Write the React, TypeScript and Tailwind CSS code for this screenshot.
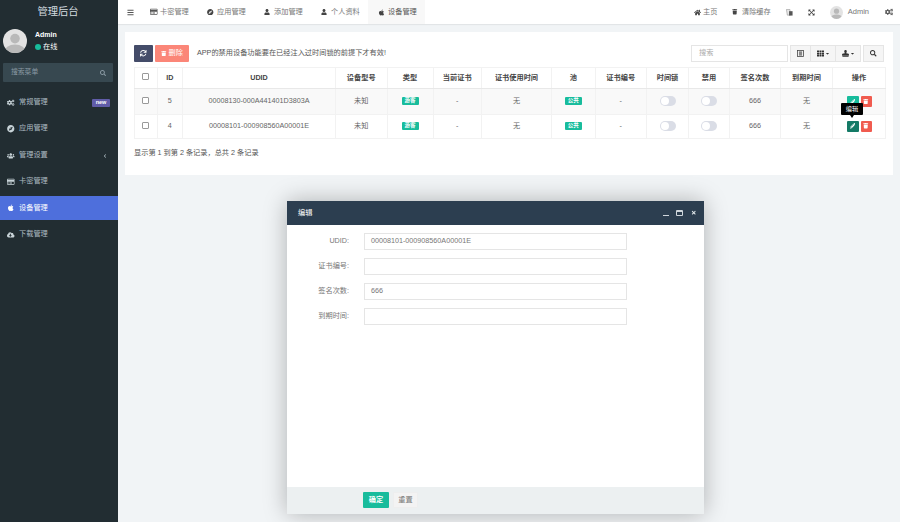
import React from "react";
import {
  FaSync, FaTrash, FaApple, FaRegCreditCard, FaUser, FaHome, FaCogs, FaExpandArrowsAlt,
  FaCompass, FaUsers, FaCloudDownloadAlt, FaTh, FaStamp, FaSearch,
  FaPencilAlt, FaBars, FaChevronLeft, FaCaretDown, FaTimes,
} from "react-icons/fa";

const font = { fontFamily: '"Liberation Sans", "Noto Sans CJK SC", sans-serif' };

function Avatar({ className, id }: { className: string; id: string }) {
  return (
    <svg viewBox="0 0 40 40" className={className}>
      <clipPath id={id}><circle cx="20" cy="20" r="20" /></clipPath>
      <g clipPath={`url(#${id})`}>
        <rect width="40" height="40" fill="#e3e3e3" />
        <circle cx="20" cy="16" r="8" fill="#b9b9b9" />
        <ellipse cx="20" cy="38" rx="18" ry="12" fill="#b9b9b9" />
      </g>
    </svg>
  );
}

function LangIcon() {
  return (
    <svg viewBox="0 0 8 8" className="w-[7px] h-[7px] ml-[15px]">
      <path d="M0.5 0.5H4.5L5 7H1.5Z" fill="#e8e8e8" stroke="#888" strokeWidth="0.6" />
      <path d="M3.5 2.5H7.5V7.5H3.5Z" fill="#555" />
    </svg>
  );
}

function ToggleColsIcon() {
  return (
    <svg viewBox="0 0 8 8" className="w-[7px] h-[7px]">
      <rect x="0.5" y="0.5" width="7" height="7" fill="none" stroke="#444" strokeWidth="0.9" />
      <rect x="2.2" y="1.5" width="3.6" height="5" fill="#888" />
    </svg>
  );
}

const menu = [
  { icon: <FaCogs />, label: "常规管理", badge: true },
  { icon: <FaCompass />, label: "应用管理" },
  { icon: <FaUsers />, label: "管理设置", arrow: true },
  { icon: <FaRegCreditCard />, label: "卡密管理" },
  { icon: <FaApple />, label: "设备管理", active: true },
  { icon: <FaCloudDownloadAlt />, label: "下载管理" },
];

const tabs = [
  { icon: <FaRegCreditCard className="text-[7.5px] text-[#555]" />, label: "卡密管理" },
  { icon: <FaCompass className="text-[6.5px]" />, label: "应用管理" },
  { icon: <FaUser className="text-[6px]" />, label: "添加管理" },
  { icon: <FaUser className="text-[6px]" />, label: "个人资料" },
  { icon: <FaApple className="text-[7px]" />, label: "设备管理", active: true },
];

const columns = [
  { t: "", w: "w-[22.5px]" },
  { t: "ID", w: "w-[25.5px]" },
  { t: "UDID", w: "w-[153px]" },
  { t: "设备型号", w: "w-[51.5px]" },
  { t: "类型", w: "w-[46px]" },
  { t: "当前证书", w: "w-[48.5px]" },
  { t: "证书使用时间", w: "w-[70px]" },
  { t: "池", w: "w-[43.5px]" },
  { t: "证书编号", w: "w-[51.5px]" },
  { t: "时间锁", w: "w-[42px]" },
  { t: "禁用", w: "w-[41px]" },
  { t: "签名次数", w: "w-[51px]" },
  { t: "到期时间", w: "w-[52px]" },
  { t: "操作", w: "w-[53px]" },
];

const rows = [
  { id: "5", udid: "00008130-000A441401D3803A", first: true },
  { id: "4", udid: "00008101-000908560A00001E", first: false },
];

function Toggle() {
  return (
    <span className="inline-block w-[16px] h-[10px] rounded-full bg-[#dadde6] align-middle relative">
      <span className="absolute left-[1px] top-[1px] w-[8px] h-[8px] rounded-full bg-white" />
    </span>
  );
}

function Badge({ children }: { children: React.ReactNode }) {
  return (
    <span className="inline-flex items-center justify-center w-[17px] h-[8px] rounded-[1px] bg-[#18bc9c] text-white text-[5.5px] font-bold leading-none align-middle">
      {children}
    </span>
  );
}

export default function App() {
  return (
    <div style={font} className="relative flex w-[900px] h-[522px] overflow-hidden bg-[#f1f4f6] text-[7.2px] text-[#666]">
      <aside className="w-[118px] shrink-0 bg-[#222d32] text-[#aebcc3] flex flex-col">
        <div className="h-[23px] flex items-center justify-center pr-[2px] text-[10.3px] text-[#d5dde0]">管理后台</div>
        <div className="h-[36px] flex items-center pl-[3px] gap-[8px]">
          <Avatar id="av1" className="w-[24px] h-[24px]" />
          <div className="flex flex-col gap-[3.5px]">
            <span className="font-bold text-white leading-[8px] text-[7px]">Admin</span>
            <span className="flex items-center gap-[2px] text-white leading-[8px]">
              <span className="w-[6px] h-[6px] rounded-full bg-[#18bc9c]" />在线
            </span>
          </div>
        </div>
        <div className="mt-[4px] ml-[3px] mr-[5px] h-[19px] bg-[#374850] rounded-[1px] flex items-center justify-between pl-[8px] pr-[7px] text-[#8a9aa3] text-[6.8px]">
          <span>搜索菜单</span>
          <FaSearch className="text-[6px]" />
        </div>
        <nav className="mt-[8.5px] flex flex-col gap-[2.4px]">
          {menu.map((m) => (
            <div
              key={m.label}
              className={`h-[24px] flex items-center pl-[7px] pr-[8px] ${m.active ? "bg-[#4e6fdc] text-white" : ""}`}
            >
              <span className={`w-[12px] text-[7.5px] ${m.active ? "text-white" : "text-[#c8d3d8]"}`}>{m.icon}</span>
              <span className="flex-1">{m.label}</span>
              {m.badge && (
                <span className="w-[18px] h-[8px] rounded-[1px] bg-[#605ca8] text-white text-[5.5px] font-bold flex items-center justify-center leading-none">new</span>
              )}
              {m.arrow && <FaChevronLeft className="text-[4px] mr-[3px] mt-[2px]" />}
            </div>
          ))}
        </nav>
      </aside>

      <main className="flex-1 min-w-0 flex flex-col">
        <header className="h-[24px] bg-white shadow-[0_1px_1px_rgba(0,0,0,0.06)] flex items-center text-[#777]">
          <FaBars className="ml-[9px] text-[7px] text-[#555]" />
          <div className="ml-[6px] flex h-full">
            {tabs.map((t, i) => (
              <div key={i} className={`w-[57px] h-full flex items-center pl-[10px] ${t.active ? "bg-[#f8f8f8] text-[#555]" : ""}`}>
                <span className="w-[10px] flex justify-start text-[#444]">{t.icon}</span>
                <span>{t.label}</span>
              </div>
            ))}
          </div>
          <div className="ml-auto flex items-center">
            <FaHome className="text-[7px] text-[#444] mr-[2px]" /><span>主页</span>
            <FaTrash className="text-[5.5px] text-[#444] ml-[15px] mr-[4px]" /><span>清除缓存</span>
            <LangIcon />
            <FaExpandArrowsAlt className="text-[7px] text-[#444] ml-[15px]" />
            <Avatar id="av2" className="w-[13px] h-[13px] ml-[15px]" />
            <span className="ml-[5px] text-[7.5px]">Admin</span>
            <FaCogs className="text-[8px] text-[#555] ml-[15.5px] mr-[7.5px]" />
          </div>
        </header>

        <section className="mt-[8px] mx-[7px] h-[143px] bg-white px-[9px] pt-[13px]">
          <div className="h-[17px] flex items-center">
            <button className="w-[19px] h-[17px] rounded-[1px] bg-[#444c69] text-white flex items-center justify-center text-[6.5px]"><FaSync /></button>
            <button className="ml-[2px] w-[34px] h-[17px] rounded-[1px] bg-[#fb8678] text-white flex items-center justify-center gap-[2px] text-[7.2px]"><FaTrash className="text-[5.5px]" />删除</button>
            <span className="ml-[8px] text-[#555]">APP的禁用设备功能要在已经注入过时间锁的前提下才有效!</span>
            <div className="ml-auto w-[97px] h-[17px] border border-[#e5e5e5] flex items-center pl-[7px] text-[#aaa]">搜索</div>
            <div className="ml-[2px] mr-[2px] h-[17px] flex border border-[#e5e5e5] bg-[#f5f5f5] text-[#333]">
              <span className="w-[20px] flex items-center justify-center border-r border-[#e5e5e5]"><ToggleColsIcon /></span>
              <span className="w-[25px] flex items-center justify-center gap-[1px] border-r border-[#e5e5e5] text-[7px]"><FaTh /><FaCaretDown className="text-[5px]" /></span>
              <span className="w-[24px] flex items-center justify-center gap-[1px] text-[7px]"><FaStamp /><FaCaretDown className="text-[5px]" /></span>
            </div>
            <div className="w-[21px] h-[17px] border border-[#e5e5e5] bg-[#f5f5f5] flex items-center justify-center text-[6.5px] text-[#333]"><FaSearch /></div>
          </div>

          <table className="mt-[5px] w-[751px] table-fixed border-collapse">
            <colgroup>{columns.map((c, i) => <col key={i} className={c.w} />)}</colgroup>
            <thead>
              <tr className="h-[21px]">
                {columns.map((c, i) => (
                  <th key={i} className={`border border-[#f2f2f2] border-b-[#e8e8e8] font-bold text-[#444] text-center p-0 ${i === 0 ? "pb-[2px]" : ""}`}>
                    {i === 0 ? <span className="inline-block w-[7px] h-[7px] border border-[#999] rounded-[1px] align-middle" /> : c.t}
                  </th>
                ))}
              </tr>
            </thead>
            <tbody>
              {rows.map((r) => {
                const td = `border border-[#f2f2f2] text-center p-0 ${r.first ? "" : "pb-[1px]"}`;
                return (
                  <tr key={r.id} className={r.first ? "h-[26px] bg-[#f9f9f9]" : "h-[24px]"}>
                    <td className={`border border-[#f2f2f2] text-center px-0 pb-0 align-top leading-none ${r.first ? "pt-[8px]" : "pt-[6.5px]"}`}>
                      <span className="inline-block w-[7px] h-[7px] border border-[#999] rounded-[1px] bg-white" />
                    </td>
                    <td className={td}>{r.id}</td>
                    <td className={td}>{r.udid}</td>
                    <td className={td}>未知</td>
                    <td className={td}><Badge>游客</Badge></td>
                    <td className={td}>-</td>
                    <td className={td}>无</td>
                    <td className={td}><Badge>公共</Badge></td>
                    <td className={td}>-</td>
                    <td className={td}><Toggle /></td>
                    <td className={td}><Toggle /></td>
                    <td className={td}>666</td>
                    <td className={td}>无</td>
                    <td className={td}>
                      <div className="flex justify-center gap-[2px]">
                        <span className={`w-[12px] h-[11px] rounded-[1px] flex items-center justify-center text-white text-[5.5px] ${r.first ? "bg-[#18bc9c]" : "bg-[#147a66]"}`}><FaPencilAlt /></span>
                        <span className="w-[11px] h-[11px] rounded-[1px] bg-[#f05b4f] flex items-center justify-center text-white text-[5.5px]"><FaTrash /></span>
                      </div>
                    </td>
                  </tr>
                );
              })}
            </tbody>
          </table>
          <p className="mt-[9px] text-[#555]">显示第 1 到第 2 条记录，总共 2 条记录</p>
        </section>
      </main>

      {/* tooltip over the edit button */}
      <div className="absolute left-[841px] top-[103px] w-[22px] h-[12px] bg-black rounded-[1px] text-white text-[6.2px] flex items-center justify-center">
        编辑
        <span className="absolute left-[9px] top-[12px] w-0 h-0 border-x-[2.5px] border-x-transparent border-t-[3px] border-t-black" />
      </div>

      {/* dialog */}
      <div className="absolute left-[287px] top-[201px] w-[417px] h-[313px] bg-white flex flex-col shadow-[0_0_22px_rgba(0,0,0,0.28)]">
        <div className="h-[24px] bg-[#2c3e50] text-white flex items-center pl-[11px] pr-[8px]">
          <span className="flex-1">编辑</span>
          <span className="w-[6px] h-[1px] bg-[#cfd6dc] mt-[4px]" />
          <span className="w-[7px] h-[6px] border border-t-2 border-[#cfd6dc] ml-[7px] rounded-[1px]" />
          <FaTimes className="text-[5.5px] text-[#dfe6e9] ml-[8px]" />
        </div>
        <form className="flex-1 pt-[8px] flex flex-col gap-[8px]">
          {[
            ["UDID:", "00008101-000908560A00001E"],
            ["证书编号:", ""],
            ["签名次数:", "666"],
            ["到期时间:", ""],
          ].map(([l, v]) => (
            <div key={l} className="flex items-center h-[17px]">
              <span className="w-[62px] text-right text-[#777]">{l}</span>
              <span className="ml-[15px] w-[263px] h-[17px] border border-[#e5e5e5] flex items-center pl-[6px] text-[#777]">{v}</span>
            </div>
          ))}
        </form>
        <div className="h-[27px] bg-[#ecf0f1] flex items-start pt-[5px] pl-[76px] gap-[4px]">
          <span className="w-[26px] h-[16px] rounded-[1px] bg-[#18bc9c] text-white font-bold flex items-center justify-center">确定</span>
          <span className="w-[25px] h-[16px] rounded-[1px] bg-[#f3f3f3] border border-[#eee] text-[#777] flex items-center justify-center">重置</span>
        </div>
      </div>
    </div>
  );
}
